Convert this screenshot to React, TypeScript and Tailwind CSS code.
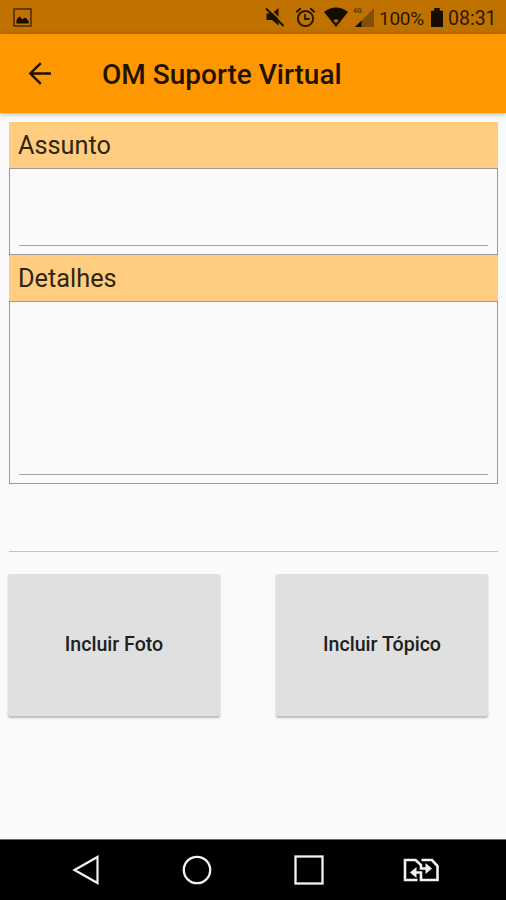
import React from "react";

function StatusBar() {
  return (
    <div className="flex h-[34px] shrink-0 items-start bg-[#bf7200] text-[#2a1a00]">
      <svg className="ml-[13px] mt-2 h-[19px] w-[19px]" viewBox="0 0 19 19" fill="none">
        <rect x="1" y="1" width="17" height="17" stroke="#4a2d00" strokeWidth="1.5" />
        <path d="M3.5 15.5V12l2.7-3.7 3.3 3.2 1.5-1.5h2l2.7 3.3v2.2z" fill="#160d00" />
      </svg>
      <svg className="ml-[233px] mt-[7px] h-5 w-5" viewBox="0 0 20 20" fill="none">
        <path d="M1.5 6.5H7L13.5 1v17.5L7 13H1.5z" fill="#1c1100" />
        <path d="M3 .5L20 17.5" stroke="#bf7200" strokeWidth="1.6" />
        <path d="M1 1.5L18.5 19" stroke="#1c1100" strokeWidth="2" />
      </svg>
      <svg className="ml-[10px] mt-[7px] h-[21px] w-[21px]" viewBox="0 0 21 21" fill="none" stroke="#241600">
        <circle cx="10.5" cy="11.5" r="7.6" strokeWidth="2" />
        <path d="M1.3 5.2L5.8 1.3M19.7 5.2L15.2 1.3" strokeWidth="2" />
        <path d="M10 7v5h4.5" strokeWidth="1.8" />
      </svg>
      <svg className="ml-[8px] mt-[7px] h-[21px] w-6" viewBox="0 0 24 21">
        <path d="M0 5Q12-3.8 24 5L12 20z" fill="#160d00" />
        <path d="M9.3 13.3q2.7-2 5.4 0L12 16.5z" fill="#a66608" />
      </svg>
      <div className="relative ml-[5px] mt-[7px] h-5 w-[21px]">
        <svg className="h-5 w-[21px]" viewBox="0 0 21 20">
          <path d="M21 1v19H2z" fill="#814f06" />
          <path d="M8.5 13.5V20H2z" fill="#160d00" />
        </svg>
        <span className="absolute left-0 top-0 text-[7px] font-bold leading-[8px] text-[#633b00]">4G</span>
      </div>
      <span className="ml-[5px] mt-2 w-[46px] whitespace-nowrap text-[19px] leading-[22px] tracking-[-0.3px]">100%</span>
      <svg className="ml-[6px] mt-2 h-[19px] w-3" viewBox="0 0 13 20" preserveAspectRatio="none">
        <path d="M0 3h3.5V0h6v3H13v17H0z" fill="#160d00" />
      </svg>
      <span className="ml-[5px] mt-2 whitespace-nowrap text-[19.5px] leading-[22px]">08:31</span>
    </div>
  );
}

function AppBar() {
  return (
    <header className="z-10 flex h-[79px] shrink-0 items-center bg-[#ff9800] pl-7 shadow-[0_1px_5px_rgba(0,0,0,0.3)]">
      <svg className="h-[23px] w-6" viewBox="0 0 24 23" fill="none" stroke="#1c1100" strokeWidth="2.4">
        <path d="M23 11.5H2.5M12.8 1.2L2.3 11.5l10.5 10.3" />
      </svg>
      <h1 className="ml-[50px] mt-0.5 whitespace-nowrap text-[28px] font-medium leading-8 text-[#1f1200]">OM Suporte Virtual</h1>
    </header>
  );
}

function Field({ label, tall }: { label: string; tall?: boolean }) {
  return (
    <section>
      <h2 className="h-[46px] bg-[#ffcc80] pl-[9px] text-[25.3px] font-normal leading-[48px] text-[#30260f]">{label}</h2>
      <div className={`flex items-end border border-[#999999] px-[9px] pb-2 ${tall ? "h-[183px]" : "h-[87px]"}`}>
        <div className="h-px w-full bg-[#a4a4a4]" />
      </div>
    </section>
  );
}

function ActionButton({ children }: { children: React.ReactNode }) {
  return (
    <button className="h-[142px] w-[212px] rounded-[2px] bg-[#e0e0e0] text-[19.6px] font-medium text-[#202020] shadow-[0_2px_2px_rgba(0,0,0,0.25)]">
      {children}
    </button>
  );
}

function NavBar() {
  return (
    <nav className="flex h-[61px] shrink-0 items-start border-t border-[#666666] bg-black">
      <svg className="ml-[72px] mt-[15px] h-[30px] w-7" viewBox="0 0 28 30" fill="none" stroke="#f2f2f2" strokeWidth="2.2">
        <path d="M2.5 15L25.5 2v26z" />
      </svg>
      <svg className="ml-[82px] mt-[15px] h-[30px] w-[30px]" viewBox="0 0 30 30" fill="none" stroke="#f2f2f2" strokeWidth="2.3">
        <circle cx="15" cy="15" r="13.2" />
      </svg>
      <svg className="ml-[82px] mt-[15px] h-[30px] w-[30px]" viewBox="0 0 30 30" fill="none" stroke="#f2f2f2" strokeWidth="2.3">
        <rect x="1.5" y="1.5" width="27" height="27" />
      </svg>
      <svg className="ml-[79px] mt-[18px] h-6 w-9" viewBox="0 0 36 24" fill="none" stroke="#f2f2f2" strokeWidth="2.6">
        <path d="M14.5 22H2V2h10.5l5.5 5v3.5h6" />
        <path d="M18.5 2H29l5.5 6v14H18v-7.5h-6" />
        <path d="M22.5 5l6.5 5.5-6.5 5.5zM13.5 9L7 14.5l6.5 5.5z" fill="#f2f2f2" stroke="none" />
      </svg>
    </nav>
  );
}

export default function App() {
  return (
    <div className="flex h-[900px] w-[506px] flex-col overflow-hidden bg-[#fafafa] font-[Roboto,sans-serif]">
      <StatusBar />
      <AppBar />
      <main className="flex-1 pl-[9px] pr-2 pt-[9px]">
        <Field label="Assunto" />
        <Field label="Detalhes" tall />
        <div className="mt-[67px] h-px bg-[#c2c2c2]" />
        <div className="-ml-px mt-[22px] flex gap-14">
          <ActionButton>Incluir Foto</ActionButton>
          <ActionButton>Incluir Tópico</ActionButton>
        </div>
      </main>
      <NavBar />
    </div>
  );
}
